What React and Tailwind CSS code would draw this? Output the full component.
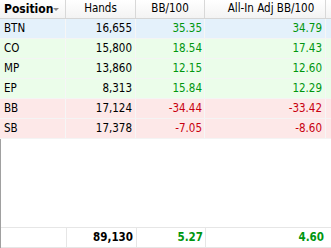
import React from "react";

const rows = [
  { pos: "BTN", hands: "16,655", bb: "35.35", adj: "34.79", tone: "blue" },
  { pos: "CO", hands: "15,800", bb: "18.54", adj: "17.43", tone: "green" },
  { pos: "MP", hands: "13,860", bb: "12.15", adj: "12.60", tone: "green" },
  { pos: "EP", hands: "8,313", bb: "15.84", adj: "12.29", tone: "green" },
  { pos: "BB", hands: "17,124", bb: "-34.44", adj: "-33.42", tone: "red" },
  { pos: "SB", hands: "17,378", bb: "-7.05", adj: "-8.60", tone: "red" },
];

const toneBg = {
  blue: "bg-[#e4f1fb]",
  green: "bg-[#ebfdea]",
  red: "bg-[#fde8e8]",
};

const cols = "grid grid-cols-[66px_70px_69px_121px_5px]";

function valueColor(v) {
  return v.startsWith("-") ? "text-[#c8000f]" : "text-[#00960f]";
}

export default function App() {
  return (
    <div
      className="w-[331px] h-[248px] bg-white flex flex-col text-[11.5px] text-black overflow-hidden"
      style={{ fontFamily: '"DejaVu Sans Condensed", "Liberation Sans", sans-serif' }}
    >
      {/* header */}
      <div className={`${cols} h-[19px] border-b border-[#d5d5d5] bg-gradient-to-b from-white to-[#f3f3f3]`}>
        <div className="flex items-center pl-[4px] border-r border-[#d8d8d8] font-bold text-[12px]">
          Position
          <svg width="6" height="4" viewBox="0 0 6 4" className="mt-[2px]">
            <path d="M0 0h6L3 3z" fill="#8a8a8a" />
          </svg>
        </div>
        <div className="flex items-center justify-center border-r border-[#d8d8d8]">Hands</div>
        <div className="flex items-center justify-center border-r border-[#d8d8d8]">BB/100</div>
        <div className="flex items-center justify-center pl-[12px] border-r border-[#d8d8d8]">All-In Adj BB/100</div>
        <div />
      </div>

      {/* rows */}
      {rows.map((r) => (
        <div key={r.pos} className={`${cols} h-[20px] border-b border-[#f4f4f4] ${toneBg[r.tone]}`}>
          <div className="flex items-center pl-[4px] border-r border-[#f6f6f6]">{r.pos}</div>
          <div className="flex items-center justify-end pr-[3px] border-r border-[#f6f6f6]">{r.hands}</div>
          <div className={`flex items-center justify-end pr-[2px] border-r border-[#f6f6f6] ${valueColor(r.bb)}`}>{r.bb}</div>
          <div className={`flex items-center justify-end pr-[3px] border-r border-[#f6f6f6] ${valueColor(r.adj)}`}>{r.adj}</div>
          <div />
        </div>
      ))}

      {/* empty area + totals */}
      <div className="flex-1 flex flex-col border-l border-[#a0a0a0]">
        <div className="flex-1" />
        <div className={`${cols} h-[21px] border-y border-[#e6e6e6] font-bold`}>
          <div className="border-r border-[#e6e6e6]" />
          <div className="flex items-center justify-end pr-[3px] border-r border-[#e6e6e6]">89,130</div>
          <div className="flex items-center justify-end pr-[2px] border-r border-[#e6e6e6] text-[#00960f]">5.27</div>
          <div className="flex items-center justify-end pr-[3px] text-[#00960f]">4.60</div>
          <div />
        </div>
      </div>
    </div>
  );
}
